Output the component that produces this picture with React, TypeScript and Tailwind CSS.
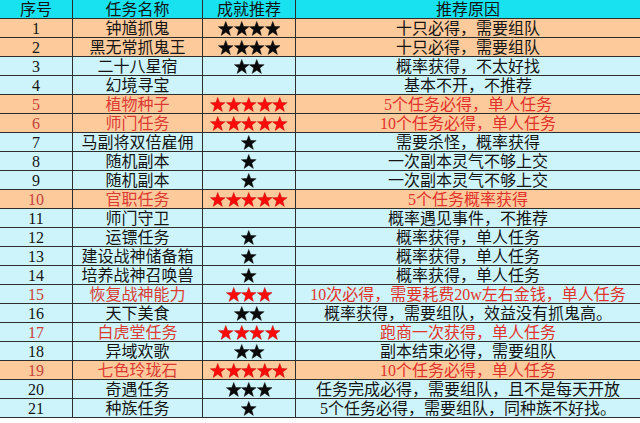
import React from "react";

type Row = {
  no: number;
  name: string;
  stars: number;
  reason: string;
  peach?: boolean;
  red?: boolean;
};

const rows: Row[] = [
  { no: 1, name: "钟馗抓鬼", stars: 4, reason: "十只必得，需要组队", peach: true },
  { no: 2, name: "黑无常抓鬼王", stars: 4, reason: "十只必得，需要组队", peach: true },
  { no: 3, name: "二十八星宿", stars: 2, reason: "概率获得，不太好找" },
  { no: 4, name: "幻境寻宝", stars: 0, reason: "基本不开，不推荐" },
  { no: 5, name: "植物种子", stars: 5, reason: "5个任务必得，单人任务", peach: true, red: true },
  { no: 6, name: "师门任务", stars: 5, reason: "10个任务必得，单人任务", peach: true, red: true },
  { no: 7, name: "马副将双倍雇佣", stars: 1, reason: "需要杀怪，概率获得" },
  { no: 8, name: "随机副本", stars: 1, reason: "一次副本灵气不够上交" },
  { no: 9, name: "随机副本", stars: 1, reason: "一次副本灵气不够上交" },
  { no: 10, name: "官职任务", stars: 5, reason: "5个任务概率获得", peach: true, red: true },
  { no: 11, name: "师门守卫", stars: 0, reason: "概率遇见事件，不推荐" },
  { no: 12, name: "运镖任务", stars: 1, reason: "概率获得，单人任务" },
  { no: 13, name: "建设战神储备箱", stars: 1, reason: "概率获得，单人任务" },
  { no: 14, name: "培养战神召唤兽", stars: 1, reason: "概率获得，单人任务" },
  { no: 15, name: "恢复战神能力", stars: 3, reason: "10次必得，需要耗费20w左右金钱，单人任务", red: true },
  { no: 16, name: "天下美食", stars: 2, reason: "概率获得，需要组队，效益没有抓鬼高。" },
  { no: 17, name: "白虎堂任务", stars: 4, reason: "跑商一次获得，单人任务", red: true },
  { no: 18, name: "异域欢歌", stars: 2, reason: "副本结束必得，需要组队" },
  { no: 19, name: "七色玲珑石", stars: 5, reason: "10个任务必得，单人任务", peach: true, red: true },
  { no: 20, name: "奇遇任务", stars: 3, reason: "任务完成必得，需要组队，且不是每天开放" },
  { no: 21, name: "种族任务", stars: 1, reason: "5个任务必得，需要组队，同种族不好找。" },
];

function Star({ red }: { red?: boolean }) {
  return (
    <svg width="15.5" height="15" viewBox="0 0 24 23" className="shrink-0">
      <polygon
        points="12,0.5 15,8.4 23.5,8.6 16.8,13.9 19.2,22.3 12,17.4 4.8,22.3 7.2,13.9 0.5,8.6 9,8.4"
        fill={red ? "#ff0a0a" : "#0a0a0a"}
        stroke={red ? "#b00000" : "#000"}
        strokeWidth="0.6"
      />
    </svg>
  );
}

const cell =
  "flex items-center justify-center whitespace-nowrap border-r border-b border-[#2e2e2e] h-[19px] leading-[19px]";

export default function App() {
  return (
    <div
      className="w-[640px] h-[423px] bg-white overflow-hidden text-[16px] text-[#141414]"
      style={{ fontFamily: '"Liberation Serif", "Noto Sans CJK SC", serif' }}
    >
      <div className="grid grid-cols-[73px_130px_93px_1fr] bg-[#18e2ef]">
        <div className={cell}>序号</div>
        <div className={cell}>任务名称</div>
        <div className={cell}>成就推荐</div>
        <div className={`${cell} border-r-0`}>推荐原因</div>
      </div>
      {rows.map((r) => (
        <div
          key={r.no}
          className={`grid grid-cols-[73px_130px_93px_1fr] ${
            r.peach ? "bg-[#fcca9b]" : "bg-[#cdf4fa]"
          }`}
        >
          <div className={`${cell} ${r.red ? "text-[#c8413c]" : ""}`}>{r.no}</div>
          <div className={`${cell} ${r.red ? "text-[#dc3b34]" : ""}`}>{r.name}</div>
          <div className={`${cell} gap-0`}>
            {Array.from({ length: r.stars }).map((_, i) => (
              <Star key={i} red={r.red} />
            ))}
          </div>
          <div className={`${cell} border-r-0 ${r.red ? "text-[#e2322b]" : ""}`}>
            {r.reason}
          </div>
        </div>
      ))}
    </div>
  );
}
